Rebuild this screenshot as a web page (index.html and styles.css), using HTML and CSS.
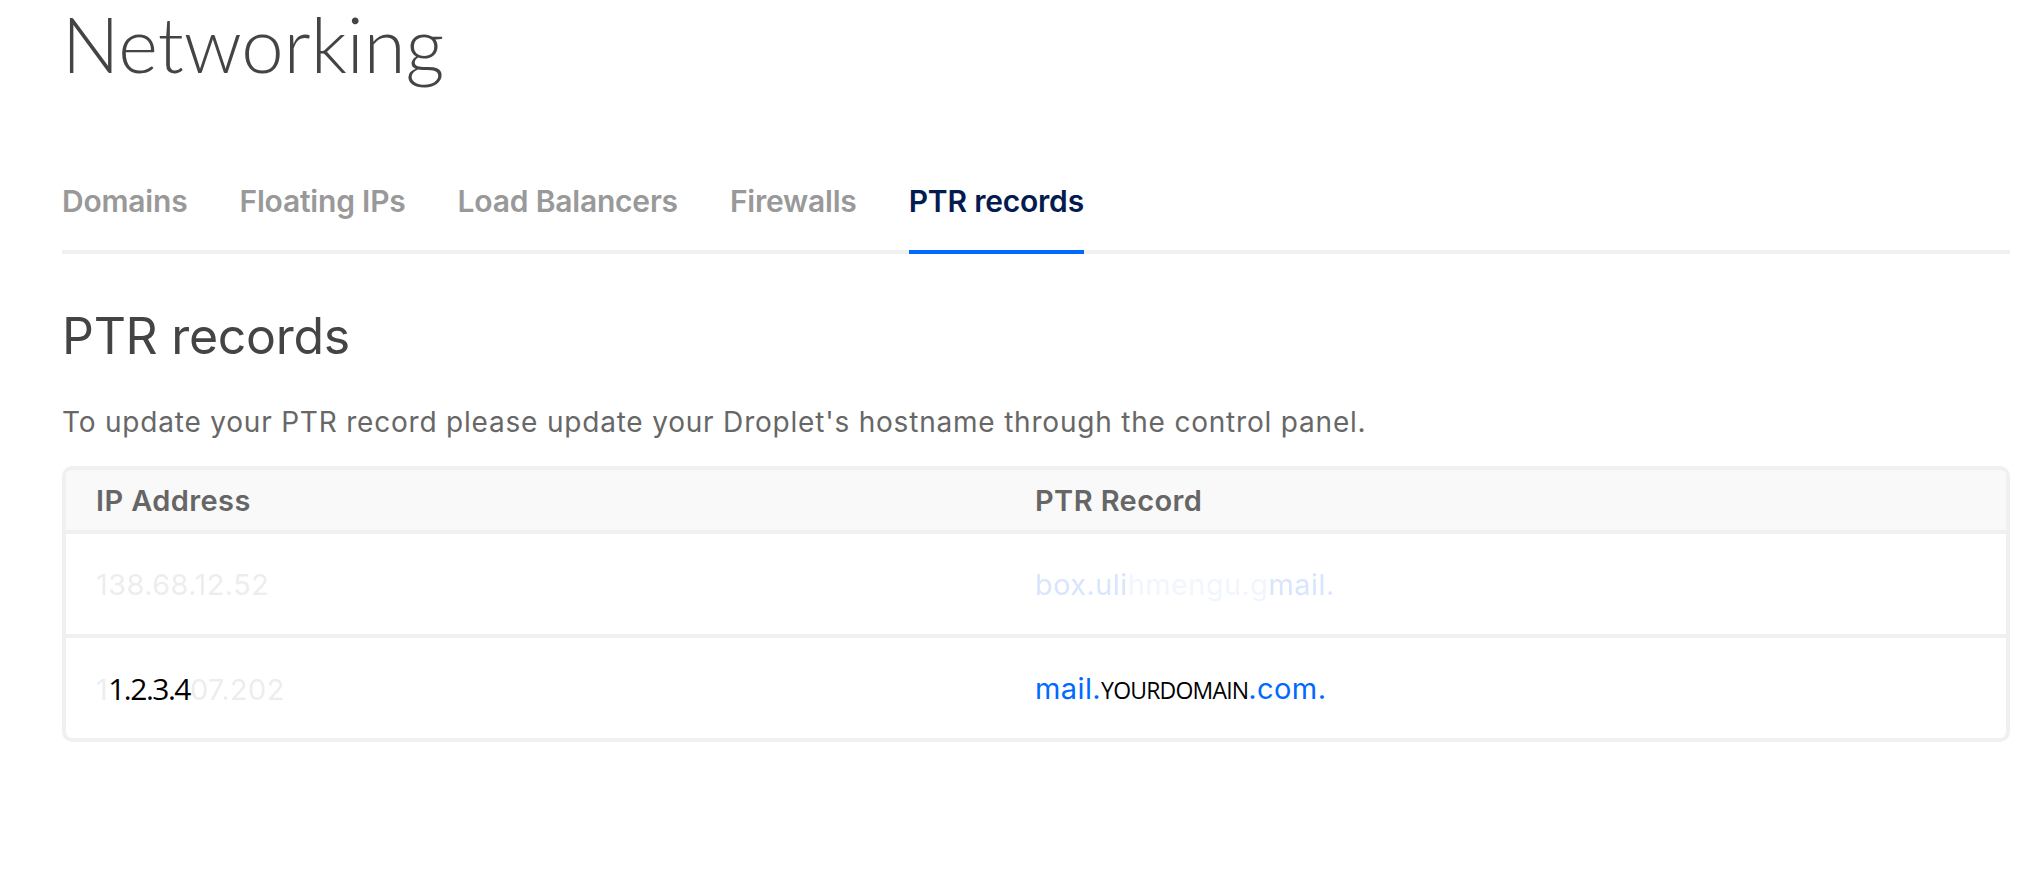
FILE: index.html
```html
<!DOCTYPE html>
<html lang="en">
<head>
<meta charset="utf-8">
<title>Networking - PTR records</title>
<link rel="stylesheet" href="styles.css">
</head>
<body>
<main class="page">
  <h1 class="title">Networking</h1>
  <nav class="tabs">
    <a class="tab">Domains</a>
    <a class="tab">Floating IPs</a>
    <a class="tab">Load Balancers</a>
    <a class="tab">Firewalls</a>
    <a class="tab active">PTR records</a>
  </nav>
  <h2 class="section-title">PTR records</h2>
  <p class="lead">To update your PTR record please update your Droplet's hostname through the control panel.</p>
  <div class="table">
    <div class="row head">
      <div class="cell">IP Address</div>
      <div class="cell">PTR Record</div>
    </div>
    <div class="row">
      <div class="cell"><span class="ghost">138.68.12.52</span></div>
      <div class="cell"><span class="ghost-blue">box.uli</span><span class="ghost-blue faint">hmengu.g</span><span class="ghost-blue">mail.</span></div>
    </div>
    <div class="row last">
      <div class="cell"><span class="ghost">1</span><span class="overlay-ip">1.2.3.4</span><span class="ghost">07.202</span></div>
      <div class="cell"><span class="link">mail.</span><span class="overlay-domain">YOURDOMAIN</span><span class="link">.com.</span></div>
    </div>
  </div>
</main>
</body>
</html>
```
FILE: styles.css
```css
* { box-sizing: border-box; }
html, body { margin: 0; padding: 0; background: #fff; }
body { font-family: Inter, "Noto Sans", sans-serif; color: #444; }

.page {
  padding: 0 16px 0 62px;
}

.title {
  margin: 0;
  padding-top: 6px;
  font-family: Lato, sans-serif;
  font-weight: 300;
  font-size: 76px;
  line-height: 76px;
  color: #444;
}

.tabs {
  display: flex;
  gap: 52px;
  margin-top: 101px;
  border-bottom: 4px solid #f0f0f0;
}
.tab {
  font-size: 30px;
  line-height: 36px;
  font-weight: 600;
  color: #999;
  padding-bottom: 31px;
  margin-bottom: -4px;
  border-bottom: 4px solid transparent;
  letter-spacing: -0.2px;
}
.tab.active {
  color: #031b4e;
  border-bottom-color: #0069ff;
}

.section-title {
  margin: 52px 0 0;
  font-size: 50px;
  line-height: 60px;
  font-weight: 400;
  color: #444;
  letter-spacing: -0.3px;
}

.lead {
  margin: 40px 0 0;
  font-size: 28px;
  line-height: 32px;
  color: #676767;
  letter-spacing: 0.8px;
}

.table {
  margin-top: 28px;
  border: 4px solid #f0f0f0;
  border-radius: 10px;
  overflow: hidden;
}
.row {
  display: grid;
  grid-template-columns: 939px 1fr;
  height: 104px;
  border-bottom: 4px solid #f0f0f0;
  align-items: center;
}
.row.last { border-bottom: 0; height: 100px; }
.row.head {
  height: 64px;
  background: #f9f9f9;
}
.cell {
  padding-left: 30px;
  font-size: 29px;
  white-space: nowrap;
  letter-spacing: 0.4px;
}
.head .cell {
  font-weight: 600;
  color: #666;
  font-size: 29px;
  letter-spacing: 0.4px;
}
.ghost {
  color: #ededed;
  filter: blur(0.5px);
}
.ghost-blue {
  color: #d8e5fd;
  filter: blur(0.5px);
}
.ghost-blue.faint { color: #f0f5fe; }
.link { color: #0069ff; }
.overlay-ip {
  font-family: "Open Sans", sans-serif;
  color: #000;
  font-size: 30px;
  letter-spacing: -1.5px;
}
.overlay-domain {
  font-family: "Open Sans", sans-serif;
  color: #000;
  font-size: 23px;
  letter-spacing: -0.8px;
}
```
